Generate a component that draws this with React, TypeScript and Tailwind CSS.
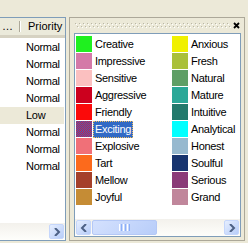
const priorities = ["Normal", "Normal", "Normal", "Normal", "Low", "Normal", "Normal", "Normal"];

const moods: [string, string][] = [
  ["Creative", "#1ff01f"],
  ["Impressive", "#d47aa8"],
  ["Sensitive", "#fbc0c0"],
  ["Aggressive", "#cc001e"],
  ["Friendly", "#fb0a0a"],
  ["Exciting", "#dc143c"],
  ["Explosive", "#f07078"],
  ["Tart", "#fc6a1c"],
  ["Mellow", "#a5402a"],
  ["Joyful", "#c58c35"],
  ["Anxious", "#f0f000"],
  ["Fresh", "#aac03a"],
  ["Natural", "#5f9f66"],
  ["Mature", "#2aa898"],
  ["Intuitive", "#227a6c"],
  ["Analytical", "#00ffff"],
  ["Honest", "#97b9cf"],
  ["Soulful", "#17346f"],
  ["Serious", "#8b3a78"],
  ["Grand", "#c0869b"],
];

const Chevron = ({ dir }: { dir: "left" | "right" }) => (
  <svg width="8" height="8" viewBox="0 0 8 8">
    <polyline
      points={dir === "right" ? "2,0 6,4 2,8" : "6,0 2,4 6,8"}
      fill="none"
      stroke="#4d6185"
      strokeWidth="2"
    />
  </svg>
);

const ScrollButton = ({ dir }: { dir: "left" | "right" }) => (
  <div className="w-[17px] h-[17px] p-[1px] shrink-0">
    <div className="w-full h-full rounded-[2px] border border-[#c5d6fb] bg-[linear-gradient(135deg,#e6eefe,#b7cdf9)] flex items-center justify-center">
      <Chevron dir={dir} />
    </div>
  </div>
);

const Gripper = () => (
  <svg width="156" height="6" className="w-[156px] shrink-0">
    <defs>
      <pattern id="grip" width="4" height="6" patternUnits="userSpaceOnUse">
        <rect x="0" y="0" width="1" height="1" fill="#b9b6a6" />
        <rect x="1" y="1" width="1" height="1" fill="#ffffff" />
        <rect x="2" y="3" width="1" height="1" fill="#b9b6a6" />
        <rect x="3" y="4" width="1" height="1" fill="#ffffff" />
      </pattern>
    </defs>
    <rect width="156" height="6" fill="url(#grip)" />
  </svg>
);

// selected swatch: colour dithered with the highlight blue
const cells = Array.from({ length: 128 }, (_, i) => {
  const y = Math.floor(i / 8);
  const x = (i % 8) * 2 + (y % 2);
  return { x, y };
});

const DitherSwatch = ({ color }: { color: string }) => (
  <svg width="16" height="16" className="shrink-0" shapeRendering="crispEdges">
    <rect width="16" height="16" fill={color} />
    {cells.map((c, i) => (
      <rect key={i} x={c.x} y={c.y} width="1" height="1" fill="#316ac5" />
    ))}
  </svg>
);

export default function App() {
  return (
    <div className="w-[248px] h-[243px] bg-[#ece9d8] flex flex-col overflow-hidden font-['Liberation_Sans',Arial,sans-serif] text-[11px] text-black">
      <div className="h-[17px] shrink-0" />
      <div className="flex h-[224px]">
        {/* priority list */}
        <div className="w-[66px] shrink-0 flex flex-col bg-white border-t border-r border-b border-[#7f9db9]">
          <div className="h-[20px] shrink-0 flex bg-[#ebeadb] border-b-[3px] border-[#d6d2c2]">
            <div className="w-[19px] flex items-center pl-[2px]">…</div>
            <div className="w-px my-[3px] bg-[#aca899]" />
            <div className="w-px my-[3px] bg-white" />
            <div className="flex-1 flex items-center pl-[7px] whitespace-nowrap overflow-hidden">Priority</div>
          </div>
          <div className="flex-1 pt-[1px] tracking-[-0.3px]">
            {priorities.map((p, i) => (
              <div
                key={i}
                className={`h-[17px] flex items-center pl-[26px] mr-[1px] ${p === "Low" ? "bg-[#ece9d8]" : ""}`}
              >
                {p}
              </div>
            ))}
          </div>
          <div className="h-[17px] shrink-0 flex justify-end bg-[linear-gradient(#f3f1ec,#fefefb)]">
            <ScrollButton dir="right" />
          </div>
        </div>

        {/* splitter */}
        <div className="w-[3px] shrink-0" />

        {/* mood pane */}
        <div className="w-[176px] shrink-0 flex flex-col border border-[#aca899]">
          <div className="h-[15px] shrink-0 flex items-center pl-[5px] pr-[4px]">
            <Gripper />
            <div className="flex-1" />
            <svg width="7" height="7" viewBox="0 0 7 7" className="shrink-0">
              <path d="M1 1 L6 6 M6 1 L1 6" stroke="#000" strokeWidth="1.8" />
            </svg>
          </div>
          <div className="flex-1 ml-[4px] mr-[3px] mb-[3px] flex flex-col bg-white border border-[#7f9db9] overflow-hidden">
            <div className="flex-1 pt-[2px] pl-[1px] overflow-hidden tracking-[-0.3px]">
              <div className="grid grid-rows-[repeat(10,17px)] grid-flow-col auto-cols-[96px]">
                {moods.map(([name, color]) => {
                  const selected = name === "Exciting";
                  return (
                    <div key={name} className="flex items-start">
                      {selected ? (
                        <DitherSwatch color={color} />
                      ) : (
                        <div className="w-[16px] h-[16px] shrink-0" style={{ backgroundColor: color }} />
                      )}
                      <div
                        className={`ml-[1px] h-[17px] pl-[2px] pr-[2px] leading-[16px] whitespace-nowrap ${
                          selected ? "bg-[#316ac5] text-white outline-1 outline-dotted outline-offset-[-1px] outline-[#f0c060]" : ""
                        }`}
                      >
                        {name}
                      </div>
                    </div>
                  );
                })}
              </div>
            </div>
            <div className="h-[17px] shrink-0 flex bg-[linear-gradient(#f3f1ec,#fefefb)]">
              <ScrollButton dir="left" />
              <div className="w-[65px] h-[17px] py-[1px] shrink-0">
                <div className="w-full h-full rounded-[2px] border border-[#b4c8f6] bg-[linear-gradient(135deg,#d4e1fe,#b8cdf9)] flex items-center justify-center gap-[1px]">
                  <div className="w-px h-[7px] bg-white" />
                  <div className="w-px h-[7px] bg-[#8cb0f8]" />
                  <div className="w-px h-[7px] bg-white" />
                  <div className="w-px h-[7px] bg-[#8cb0f8]" />
                  <div className="w-px h-[7px] bg-white" />
                  <div className="w-px h-[7px] bg-[#8cb0f8]" />
                </div>
              </div>
              <div className="flex-1" />
              <ScrollButton dir="right" />
            </div>
          </div>
        </div>
      </div>
    </div>
  );
}
